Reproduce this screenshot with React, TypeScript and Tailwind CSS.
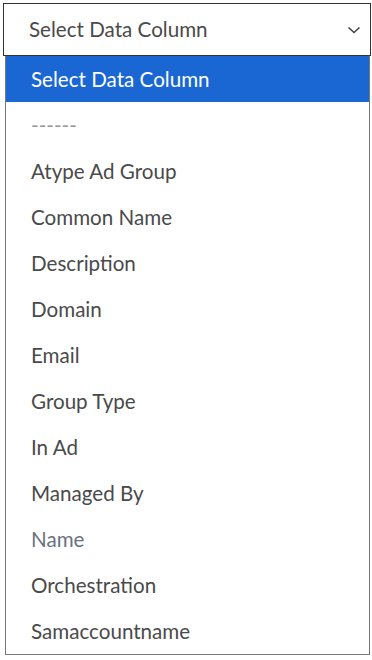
import React from "react";

const options = [
  "------",
  "Atype Ad Group",
  "Common Name",
  "Description",
  "Domain",
  "Email",
  "Group Type",
  "In Ad",
  "Managed By",
  "Name",
  "Orchestration",
  "Samaccountname",
];

export default function App() {
  return (
    <div
      className="h-[660px] w-[372px] bg-white pt-[3px]"
      style={{ fontFamily: "Lato, 'Noto Sans', sans-serif" }}
    >
      <div className="ml-[3px] mr-[1px] flex h-[53px] items-center justify-between border border-[#333] bg-white pl-[25px] pr-[9px] text-[20.6px] text-[#4a4a4a]">
        <span>Select Data Column</span>
        <svg className="h-[10px] w-[14px] text-[#444]" viewBox="0 0 14 10" fill="none" stroke="currentColor" strokeWidth="1.6">
          <path d="M1.5 2.5l5.5 5 5.5-5" />
        </svg>
      </div>
      <div className="ml-[5px] mr-[2px] border border-t-0 border-[#777] bg-white">
        <div className="flex h-[46px] items-center bg-[#1a67d4] pl-[25px] text-[20.6px] text-white">
          Select Data Column
        </div>
        {options.map((o) => (
          <div
            key={o}
            className={`flex h-[46px] items-center pl-[25px] text-[20.6px] ${
              o === "------" ? "text-[#999]" : o === "Name" ? "text-[#6b7280]" : "text-[#4a4a4a]"
            }`}
          >
            {o}
          </div>
        ))}
      </div>
    </div>
  );
}
